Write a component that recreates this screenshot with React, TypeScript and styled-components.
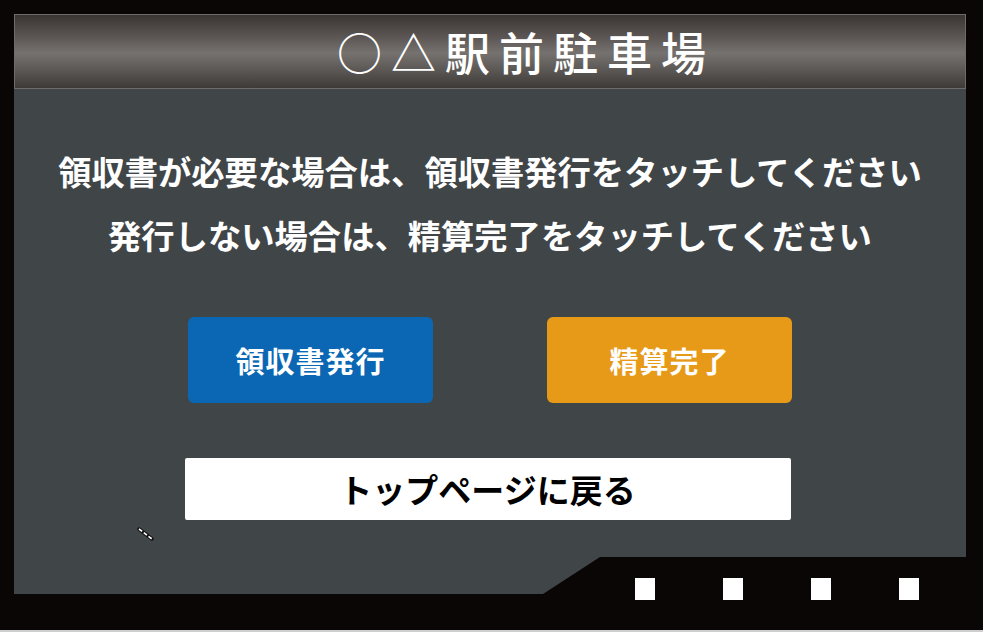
import React from "react";
import styled, { createGlobalStyle } from "styled-components";

const Global = createGlobalStyle`
  html, body { margin: 0; padding: 0; background: #dcdcdc; }
  body { font-family: "Noto Sans CJK JP", "Noto Sans", sans-serif; }
`;

const Screen = styled.div`
  position: relative;
  width: 983px;
  height: 632px;
  box-sizing: border-box;
  background: #0a0606;
  padding: 14px 17px 0 14px;
  display: flex;
  flex-direction: column;
  overflow: hidden;
  border-bottom: 2px solid #cfcfcf;
`;

const TitleBar = styled.header`
  height: 75px;
  box-sizing: border-box;
  border: 1px solid #6e6c6a;
  background: linear-gradient(
    to bottom,
    #3a3533 0%,
    #5b5653 30%,
    #76726f 52%,
    #5d5956 74%,
    #3e3a38 100%
  );
  display: flex;
  align-items: center;
  justify-content: center;
  padding-left: 72px;
`;

const Title = styled.h1`
  margin: 0;
  color: #ffffff;
  font-family: "Noto Sans CJK JP", sans-serif;
  font-weight: 500;
  font-size: 45px;
  letter-spacing: 9px;
  line-height: 1;
`;

const Body = styled.main`
  height: 468px;
  background: #404548;
  display: flex;
  flex-direction: column;
  align-items: center;
  padding-top: 50px;
  box-sizing: border-box;
  position: relative;
`;

const Message = styled.p`
  margin: 0;
  color: #ffffff;
  font-family: "Noto Sans CJK JP", sans-serif;
  font-weight: 700;
  font-size: 33.3px;
  line-height: 64px;
  text-align: center;
  white-space: nowrap;
`;

const ButtonRow = styled.div`
  display: flex;
  gap: 114px;
  margin-top: 50px;
`;

const ActionButton = styled.button<{ $tone: "blue" | "orange" }>`
  width: 245px;
  height: 86px;
  border: none;
  border-radius: 6px;
  background: ${(p) => (p.$tone === "blue" ? "#0b67b3" : "#e69a18")};
  color: #ffffff;
  font-family: "Noto Sans CJK JP", sans-serif;
  font-weight: 700;
  font-size: 29px;
  letter-spacing: 1px;
  display: flex;
  align-items: center;
  justify-content: center;
  padding: 0;
`;

const TopButton = styled.button`
  margin-top: 55px;
  margin-right: 5px;
  width: 606px;
  height: 62px;
  border: none;
  border-radius: 2px;
  background: #ffffff;
  color: #000000;
  font-family: "Noto Sans CJK JP", sans-serif;
  font-weight: 700;
  font-size: 33px;
  display: flex;
  align-items: center;
  justify-content: center;
  padding: 0;
`;

const CursorMark = styled.svg`
  position: absolute;
  left: 123px;
  top: 438px;
`;

const Footer = styled.footer`
  display: flex;
  align-items: flex-start;
`;

const FooterLeft = styled.div`
  width: 586px;
  height: 37px;
  background: #404548;
  clip-path: polygon(0 0, 100% 0, calc(100% - 57px) 100%, 0 100%);
`;

const FooterRight = styled.div`
  flex: 1;
  display: flex;
  padding: 21px 0 0 35px;
  gap: 68px;
`;

const Square = styled.span`
  display: block;
  width: 20px;
  height: 22px;
  background: #ffffff;
`;

export default function App() {
  return (
    <>
      <Global />
      <Screen>
        <TitleBar>
          <Title>○△駅前駐車場</Title>
        </TitleBar>
        <Body>
          <Message>
            領収書が必要な場合は、領収書発行をタッチしてください
            <br />
            発行しない場合は、精算完了をタッチしてください
          </Message>
          <ButtonRow>
            <ActionButton $tone="blue">領収書発行</ActionButton>
            <ActionButton $tone="orange">精算完了</ActionButton>
          </ButtonRow>
          <TopButton>トップページに戻る</TopButton>
          <CursorMark width="18" height="14" viewBox="0 0 18 14">
            <line x1="2" y1="2" x2="15" y2="12" stroke="#111" strokeWidth="3.5" strokeLinecap="round" />
            <line x1="2" y1="2" x2="15" y2="12" stroke="#fff" strokeWidth="1.6" strokeDasharray="4 2" />
          </CursorMark>
        </Body>
        <Footer>
          <FooterLeft />
          <FooterRight>
            <Square />
            <Square />
            <Square />
            <Square />
          </FooterRight>
        </Footer>
      </Screen>
    </>
  );
}
